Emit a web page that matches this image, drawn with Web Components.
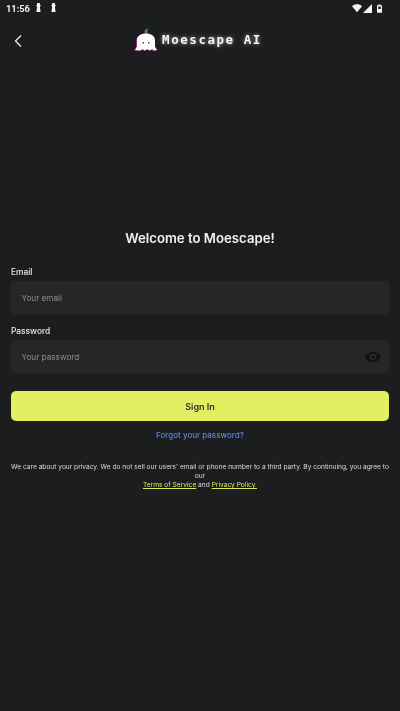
<!DOCTYPE html>
<html>
<head>
<meta charset="utf-8">
<style>
  html, body { margin: 0; height: 100%; background: #1c1d1f; overflow: hidden; }
  body { font-family: Inter, "Liberation Sans", sans-serif; color: #fff; }
</style>
</head>
<body>
<login-page></login-page>

<script>
// Status bar along the top of the phone.
customElements.define('status-bar',
  class extends HTMLElement {
    constructor() {
      super()
      this.attachShadow({ mode: 'open' }).innerHTML = `
<style>
  :host { display: flex; align-items: center; height: 16px; padding: 0 18px 0 6px; font: 700 9.300px Roboto, sans-serif; color: #f0f0f0; }
  .time { margin-right: 5.500px; }
  .spacer { flex: 1; }
  svg { display: block; fill: #f4f4f4; }
  .key { margin-right: 8px; }
  .wifi { margin-right: 1px; }
  .cell { margin-right: 5px; }
</style>
<span class="time">11:56</span>
<svg class="key" width="7" height="10" viewBox="0 0 7 11"><path d="M2 0h3v1.500l1 1.500-1 1.500.8 5.500H1.200L2 4.500 1 3l1-1.500z"/></svg>
<svg class="key" width="7" height="10" viewBox="0 0 7 11"><path d="M2 0h3v1.500l1 1.500-1 1.500.8 5.500H1.200L2 4.500 1 3l1-1.500z"/></svg>
<span class="spacer"></span>
<svg class="wifi" width="10" height="9" viewBox="0 0 12 10"><path d="M0 2.200C3.400-.7 8.600-.7 12 2.200L6 9.500z"/></svg>
<svg class="cell" width="9" height="9" viewBox="0 0 9 9"><path d="M9 0v9H0z"/></svg>
<svg width="5" height="9" viewBox="0 0 6 10"><path fill-rule="evenodd" d="M2 0h2v1h2v9H0V1h2zM1.500 2.500v3h3v-3z"/></svg>`
    }
  }
)

// Top bar: back arrow and the ghost logo.
customElements.define('app-header',
  class extends HTMLElement {
    constructor() {
      super()
      this.attachShadow({ mode: 'open' }).innerHTML = `
<style>
  :host { display: flex; align-items: center; justify-content: center; position: relative; height: 48px; padding-right: 4px; box-sizing: border-box; }
  .back { position: absolute; left: 13px; top: 18px; }
  .logo { display: flex; align-items: center; gap: 4px; }
  .name { font: 700 12.500px "DejaVu Sans Mono", monospace; letter-spacing: 1.550px; color: #f4f4f4; text-shadow: 0 0 4px rgba(255,255,255,.6); position: relative; top: -1px; }
</style>
<svg class="back" width="11" height="14" viewBox="0 0 11 14"><path d="M8 1.500 2.500 7 8 12.500" fill="none" stroke="#e6e6e6" stroke-width="1.400"/></svg>
<div class="logo">
  <svg width="24" height="24" viewBox="0 0 24 24">
    <path d="M11 6 10.500 2.500l3.500-2.500-.5 5z" fill="#4c8a36"/>
    <path d="M1 22 3 18.500V12C3 8 7 5.500 12 5.500s9 2.500 9 6.500v6.500L23 22l-3 .5-2-1.500-2 1.500-2.500-1.500-2.500 1.500-2.500-1.500-2 1.500z" fill="#d6249f" transform="translate(-.7 .5)"/>
    <path d="M1 22 3 18.500V12C3 8 7 5.500 12 5.500s9 2.500 9 6.500v6.500L23 22l-3 .5-2-1.500-2 1.500-2.500-1.500-2.500 1.500-2.500-1.500-2 1.500z" fill="#fff"/>
    <rect x="8.500" y="14" width="1.400" height="1.600" fill="#444"/><rect x="14" y="14" width="1.400" height="1.600" fill="#444"/>
  </svg>
  <span class="name">Moescape AI</span>
</div>`
    }
  }
)

// Label with a dark input box, the slot takes a trailing icon.
customElements.define('text-field',
  class extends HTMLElement {
    constructor() {
      super()
      this.attachShadow({ mode: 'open' }).innerHTML = `
<style>
  :host { display: block; }
  label { display: block; font: 500 8.400px/11px Inter, sans-serif; color: #e8e8e8; margin-bottom: 3px; }
  .box { display: flex; align-items: center; justify-content: space-between; height: 33px; padding: 0 8px 0 10.500px; background: #252628; border-radius: 3px; font: 400 8.200px Inter, sans-serif; color: #8e8f93; }
</style>
<label></label>
<div class="box"><span class="hint"></span><slot></slot></div>`
    }

    connectedCallback() {
      this.shadowRoot.querySelector('label').textContent = this.getAttribute('label')
      this.shadowRoot.querySelector('.hint').textContent = this.getAttribute('hint')
    }
  }
)

// The whole sign in screen.
customElements.define('login-page',
  class extends HTMLElement {
    constructor() {
      super()
      this.attachShadow({ mode: 'open' }).innerHTML = `
<style>
  :host { display: block; height: 711px; will-change: transform; }
  main { padding: 164px 11px 0; display: flex; flex-direction: column; }
  h1 { margin: 0 0 19px; font: 600 13.200px/20px Inter, sans-serif; text-align: center; color: #f2f2f2; }
  text-field + text-field { margin-top: 12px; }
  button { display: block; width: 100%; height: 30px; margin-top: 18px; padding: 0; border: 0; border-radius: 5px; background: #e3ef61; color: #2f3032; font: 600 9px Inter, sans-serif; }
  .forgot { margin-top: 9px; font: 500 8px/11px Inter, sans-serif; text-align: center; color: #5a86d6; }
  .legal { margin: 22px -2px 0; font: 400 6.620px/9px Inter, sans-serif; text-align: center; color: #dcdcdc; }
  .legal a { color: #dfe85f; text-decoration: underline; }
  .eye { display: block; fill: #111214; }
</style>
<status-bar></status-bar>
<app-header></app-header>
<main>
  <h1>Welcome to Moescape!</h1>
  <text-field label="Email" hint="Your email"></text-field>
  <text-field label="Password" hint="Your password">
    <svg class="eye" width="16" height="12" viewBox="0 0 16 12"><path fill-rule="evenodd" d="M8 1c3.500 0 6.400 2 8 5-1.600 3-4.500 5-8 5S1.600 9 0 6c1.600-3 4.500-5 8-5zm0 1.700a3.300 3.300 0 1 0 0 6.600 3.300 3.300 0 0 0 0-6.600zM8 4.500a1.500 1.500 0 1 1 0 3 1.500 1.500 0 0 1 0-3z"/></svg>
  </text-field>
  <button>Sign In</button>
  <div class="forgot">Forgot your password?</div>
  <div class="legal">We care about your privacy. We do not sell our users' email or phone number to a third party. By continuing, you agree to our<br><a>Terms of Service</a> and <a>Privacy Policy.</a></div>
</main>`
    }
  }
)
</script>
</body>
</html>
